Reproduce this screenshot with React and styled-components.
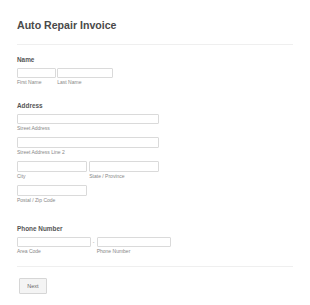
import React from 'react';
import styled, { createGlobalStyle } from 'styled-components';

const GlobalStyle = createGlobalStyle`
  html, body {
    margin: 0;
    padding: 0;
    background: #fff;
  }
  body {
    font-family: "Liberation Sans", Arial, sans-serif;
  }
`;

const Page = styled.div`
  width: 310px;
  height: 305px;
  box-sizing: border-box;
  padding: 19px 17px 0 17px;
  background: #fff;
  overflow: hidden;
`;

const Header = styled.div`
  padding-bottom: 13px;
  border-bottom: 1px solid #efefef;
`;

const Title = styled.h1`
  margin: 0;
  font-size: 10.6px;
  line-height: 12px;
  font-weight: bold;
  color: #4a4a4a;
`;

const Field = styled.div`
  margin-top: ${p => p.$top}px;
`;

const Label = styled.div`
  font-size: 6.4px;
  line-height: 8px;
  font-weight: bold;
  color: #555;
  margin-bottom: 4px;
`;

const Row = styled.div`
  display: flex;
  align-items: flex-start;
  gap: ${p => p.$gap || 0}px;
  margin-bottom: ${p => p.$space || 0}px;
`;

const Group = styled.div`
  display: flex;
  flex-direction: column;
  width: ${p => p.$w}px;
`;

const Input = styled.input`
  display: block;
  box-sizing: border-box;
  width: 100%;
  height: ${p => p.$h || 10}px;
  margin: 0;
  padding: 0 2px;
  border: 1px solid #dadada;
  border-radius: 1px;
  background: #fff;
  outline: none;
`;

const Sub = styled.span`
  margin-top: 1px;
  font-size: 5px;
  line-height: 6px;
  color: #888;
  white-space: nowrap;
`;

const Dash = styled.span`
  width: 6px;
  text-align: center;
  font-size: 5px;
  line-height: 10px;
  color: #999;
`;

const Footer = styled.div`
  margin-top: 12px;
  border-top: 1px solid #efefef;
  padding: 11px 0 0 2px;
`;

const Button = styled.button`
  display: block;
  width: 28px;
  height: 16px;
  box-sizing: border-box;
  padding: 0;
  border: 1px solid #d6d6d6;
  border-radius: 1px;
  background: #f4f4f4;
  color: #666;
  font-family: "Liberation Sans", Arial, sans-serif;
  font-size: 5.5px;
  cursor: pointer;
`;

const Box = ({ w, sub, h }) => (
  <Group $w={w}>
    <Input $h={h} />
    <Sub>{sub}</Sub>
  </Group>
);

export default function App() {
  return (
    <Page>
      <GlobalStyle />
      <Header>
        <Title>Auto Repair Invoice</Title>
      </Header>

      <Field $top={11}>
        <Label>Name</Label>
        <Row $gap={1.6}>
          <Box w={38.7} sub="First Name" />
          <Box w={55.7} sub="Last Name" />
        </Row>
      </Field>

      <Field $top={17}>
        <Label>Address</Label>
        <Row $space={6}>
          <Box w={142} sub="Street Address" h={10.4} />
        </Row>
        <Row $space={6}>
          <Box w={142} sub="Street Address Line 2" h={11} />
        </Row>
        <Row $gap={2.6} $space={6}>
          <Box w={69.7} sub="City" h={10.7} />
          <Box w={69.7} sub="State / Province" h={10.7} />
        </Row>
        <Row>
          <Box w={69.7} sub="Postal / Zip Code" h={10.7} />
        </Row>
      </Field>

      <Field $top={22}>
        <Label>Phone Number</Label>
        <Row>
          <Box w={73.7} sub="Area Code" h={10.7} />
          <Dash>-</Dash>
          <Box w={74} sub="Phone Number" h={10.7} />
        </Row>
      </Field>

      <Footer>
        <Button>Next</Button>
      </Footer>
    </Page>
  );
}
